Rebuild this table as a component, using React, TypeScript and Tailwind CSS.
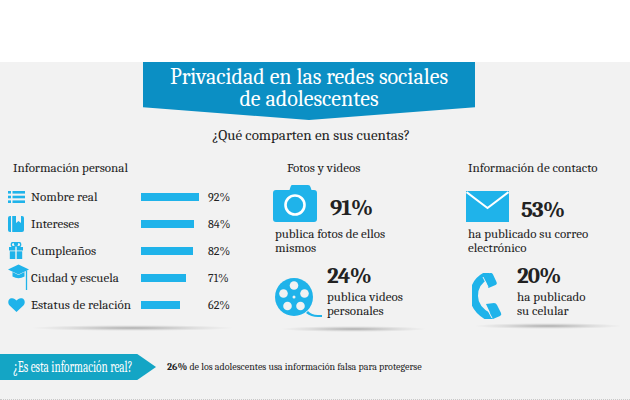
import React from "react";

const BLUE = "#1fb3ea";

const ListIcon = () => (
  <svg width="17" height="12" viewBox="0 0 17 12">
    <rect x="0" y="0" width="3" height="2.6" fill={BLUE} />
    <rect x="4.5" y="0" width="12.5" height="2.6" fill={BLUE} />
    <rect x="0" y="4.7" width="3" height="2.6" fill={BLUE} />
    <rect x="4.5" y="4.7" width="12.5" height="2.6" fill={BLUE} />
    <rect x="0" y="9.4" width="3" height="2.6" fill={BLUE} />
    <rect x="4.5" y="9.4" width="12.5" height="2.6" fill={BLUE} />
  </svg>
);

const BookIcon = () => (
  <svg width="16" height="16" viewBox="0 0 16 16">
    <rect x="0" y="0" width="16" height="16" rx="2" fill={BLUE} />
    <rect x="3" y="0" width="1.2" height="16" fill="#f2f2f2" />
    <path d="M8 0 L13 0 L13 7 L10.5 5 L8 7 Z" fill="#f2f2f2" />
  </svg>
);

const GiftIcon = () => (
  <svg width="16" height="17" viewBox="0 0 16 17">
    <circle cx="5.5" cy="2.5" r="2.2" fill="none" stroke={BLUE} strokeWidth="1.3" />
    <circle cx="10.5" cy="2.5" r="2.2" fill="none" stroke={BLUE} strokeWidth="1.3" />
    <circle cx="8" cy="1.8" r="1.6" fill="none" stroke={BLUE} strokeWidth="1.2" />
    <rect x="1" y="5" width="14" height="3.5" fill={BLUE} />
    <rect x="1.8" y="9.3" width="12.4" height="7.7" fill={BLUE} />
    <rect x="7.3" y="5" width="1.4" height="12" fill="#f2f2f2" />
  </svg>
);

const CapIcon = () => (
  <svg width="21" height="27" viewBox="0 0 21 27">
    <path d="M0 5.5 L10.5 0.5 L21 5.5 L10.5 10.5 Z" fill={BLUE} />
    <path d="M4.5 8 L4.5 12.5 Q10.5 16 16.5 12.5 L16.5 8 L10.5 11 Z" fill={BLUE} />
    <path d="M18.5 6.5 L18.5 26" stroke={BLUE} strokeWidth="1.3" />
  </svg>
);

const HeartIcon = () => (
  <svg width="17" height="14" viewBox="0 0 17 14">
    <path d="M8.5 14 L1.6 7.4 C-0.6 5.2 0 1.2 3 0.3 C5.2 -0.3 7.2 0.8 8.5 2.6 C9.8 0.8 11.8 -0.3 14 0.3 C17 1.2 17.6 5.2 15.4 7.4 Z" fill={BLUE} />
  </svg>
);

const CameraIcon = () => (
  <svg width="44" height="37" viewBox="0 0 44 37">
    <path d="M19 0 L35 0 Q37 0 37.5 2 L38.5 5 L41 5 Q44 5 44 8 L44 34 Q44 37 41 37 L3 37 Q0 37 0 34 L0 8 Q0 5 3 5 L16.5 5 L17.5 2 Q18 0 19 0 Z" fill={BLUE} />
    <circle cx="22" cy="20" r="9.5" fill="none" stroke="#ffffff" strokeWidth="2.6" />
  </svg>
);

const ReelIcon = () => (
  <svg width="48" height="40" viewBox="0 0 48 40">
    <path d="M33 34 Q37 38.5 44 38 L47 38 L47 40 L43 40 Q36 40 31 36 Z" fill={BLUE} />
    <circle cx="19" cy="20" r="19" fill={BLUE} />
    <circle cx="19" cy="8.5" r="4.3" fill="#f2f2f2" />
    <circle cx="8.5" cy="16.5" r="4.3" fill="#f2f2f2" />
    <circle cx="29.5" cy="16.5" r="4.3" fill="#f2f2f2" />
    <circle cx="12.5" cy="29" r="4.3" fill="#f2f2f2" />
    <circle cx="25.5" cy="29" r="4.3" fill="#f2f2f2" />
    <circle cx="19" cy="20" r="1.5" fill="#f2f2f2" />
  </svg>
);

const MailIcon = () => (
  <svg width="43" height="31" viewBox="0 0 43 31">
    <rect x="0" y="0" width="43" height="31" fill={BLUE} />
    <path d="M0.5 1 L21.5 17 L42.5 1" fill="none" stroke="#ffffff" strokeWidth="2" />
  </svg>
);

const PhoneIcon = () => (
  <svg width="31" height="46" viewBox="0 0 31 46">
    <path d="M14 3 Q2 9 2 23 Q2 36 17 44" fill="none" stroke={BLUE} strokeWidth="8" strokeLinecap="round" />
    <path d="M11 2 L18 0 Q20 -0.5 21 1.5 L24.5 9 Q25.5 11 23.5 12 L16.5 15 Z" fill={BLUE} />
    <path d="M14 31 L22 30 Q24 30 25 32 L29 40 Q30 42 28 43 L21 46 Z" fill={BLUE} />
    <path d="M11 4 L16 14" stroke="#f2f2f2" strokeWidth="1" />
    <path d="M13 32 L20 45" stroke="#f2f2f2" strokeWidth="1" />
  </svg>
);

const rows = [
  { icon: <ListIcon />, label: "Nombre real", pct: 92 },
  { icon: <BookIcon />, label: "Intereses", pct: 84 },
  { icon: <GiftIcon />, label: "Cumpleaños", pct: 82 },
  { icon: <CapIcon />, label: "Ciudad y escuela", pct: 71 },
  { icon: <HeartIcon />, label: "Estatus de relación", pct: 62 },
];

const Shadow = ({ w }: { w: string }) => (
  <div className={`${w} h-[6px] bg-[radial-gradient(ellipse_at_center,rgba(0,0,0,0.28)_0%,rgba(0,0,0,0.08)_45%,transparent_70%)]`} />
);

export default function App() {
  return (
    <div className="w-[630px] h-[400px] overflow-hidden bg-white font-serif [font-family:Liberation_Serif,serif] text-[#222]">
      <div className="h-[62px] bg-white" />
      <div className="h-[338px] bg-[#f2f2f2] flex flex-col border-b border-dotted border-[#c8c8c8]">
        <div className="flex justify-center">
          <div className="ml-[-12px] w-[332px] h-[58px] bg-[#0b8fc4] [clip-path:polygon(0_0,100%_0,100%_78%,50%_100%,0_78%)] flex flex-col items-center pt-[4px] text-white text-[22px] leading-[22px]">
            <div className="whitespace-nowrap text-center">Privacidad en las redes sociales<br />de adolescentes</div>
          </div>
        </div>
        <div className="mt-[6px] text-center text-[15px] leading-[18px] ml-[-8px]">¿Qué comparten en sus cuentas?</div>

        <div className="mt-[16px] flex">
          {/* left */}
          <div className="w-[273px] pl-[8px] flex flex-col">
            <div className="pl-[5px] text-[13px] leading-[16px]">Información personal</div>
            <div className="mt-[7px] flex flex-col">
              {rows.map((r) => (
                <div key={r.label} className="h-[27px] flex items-center">
                  <div className="w-[23px] flex justify-start">{r.icon}</div>
                  <div className="w-[110px] text-[13px] leading-[16px]">{r.label}</div>
                  <div className="w-[67px]">
                    <div className="h-[8px] bg-[#1fb3ea]" style={{ width: `${r.pct * 0.63}px` }} />
                  </div>
                  <div className="text-[12px] leading-[16px]">{r.pct}%</div>
                </div>
              ))}
            </div>
            <div className="mt-[7px] pl-[22px]"><Shadow w="w-[205px]" /></div>
          </div>

          {/* middle */}
          <div className="w-[193px] flex flex-col">
            <div className="pl-[14px] text-[13px] leading-[16px]">Fotos y videos</div>
            <div className="mt-[9px] flex items-center">
              <CameraIcon />
              <div className="ml-[13px] mt-[8px] font-bold text-[23px] leading-[24px] tracking-[-1px]">91%</div>
            </div>
            <div className="mt-[5px] pl-[2px] text-[13px] leading-[14px]">publica fotos de ellos<br />mismos</div>
            <div className="mt-[9px] flex">
              <div className="pt-[13px] pl-[2px]"><ReelIcon /></div>
              <div className="ml-[4px] flex flex-col">
                <div className="font-bold text-[23px] leading-[24px] tracking-[-1px]">24%</div>
                <div className="mt-[2px] text-[13px] leading-[14px]">publica videos<br />personales</div>
              </div>
            </div>
            <div className="mt-[8px] pl-[7px]"><Shadow w="w-[147px]" /></div>
          </div>

          {/* right */}
          <div className="flex-1 flex flex-col">
            <div className="pl-[2px] text-[13px] leading-[16px]">Información de contacto</div>
            <div className="mt-[14px] flex items-center">
              <MailIcon />
              <div className="ml-[12px] mt-[8px] font-bold text-[23px] leading-[24px] tracking-[-1px]">53%</div>
            </div>
            <div className="mt-[5px] pl-[2px] text-[13px] leading-[14px]">ha publicado su correo<br />electrónico</div>
            <div className="mt-[9px] flex">
              <div className="pt-[9px] pl-[6px]"><PhoneIcon /></div>
              <div className="ml-[14px] flex flex-col">
                <div className="font-bold text-[23px] leading-[24px] tracking-[-1px]">20%</div>
                <div className="mt-[2px] text-[13px] leading-[14px]">ha publicado<br />su celular</div>
              </div>
            </div>
            <div className="mt-[4px] pl-[7px]"><Shadow w="w-[150px]" /></div>
          </div>
        </div>

        <div className="mt-[22px] flex items-center">
          <div className="w-[156px] h-[26px] bg-[#14a5c5] [clip-path:polygon(0_0,88%_0,100%_50%,88%_100%,0_100%)] flex items-center pl-[13px] overflow-hidden">
            <span className="inline-block origin-left scale-x-[0.7] whitespace-nowrap text-white text-[16px] leading-[18px]">¿Es esta información real?</span>
          </div>
          <div className="ml-[11px] text-[10px] leading-[14px] whitespace-nowrap"><b>26%</b> de los adolescentes usa información falsa para protegerse</div>
        </div>
      </div>
    </div>
  );
}
